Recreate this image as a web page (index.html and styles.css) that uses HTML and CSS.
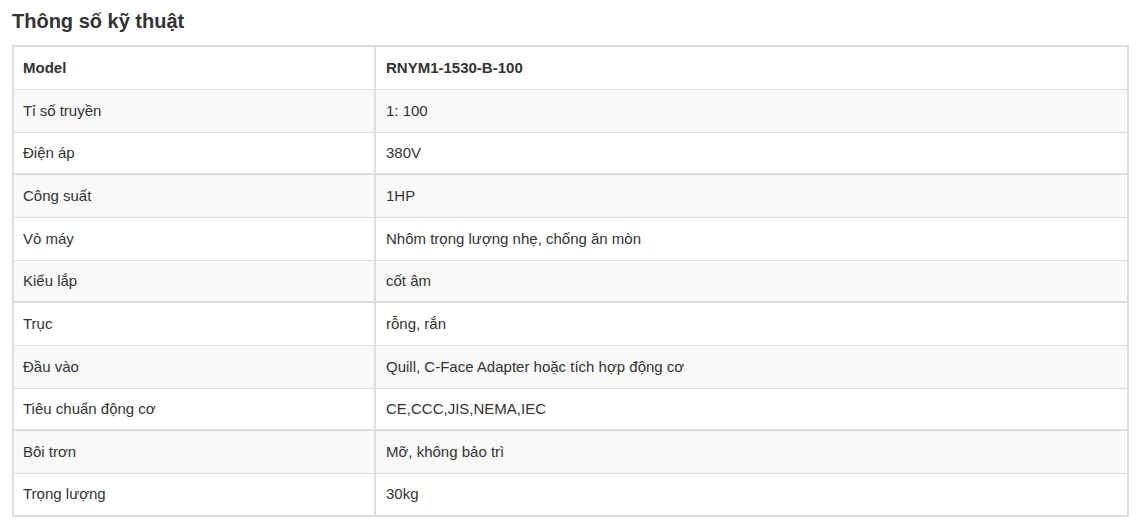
FILE: index.html
```html
<!DOCTYPE html>
<html lang="vi">
<head>
<meta charset="utf-8">
<title>Thông số kỹ thuật</title>
<link rel="stylesheet" href="styles.css">
</head>
<body>
<div class="page">
  <h2 class="title">Thông số kỹ thuật</h2>
  <table class="specs">
    <tbody>
      <tr class="head"><td>Model</td><td>RNYM1-1530-B-100</td></tr>
      <tr><td>Tỉ số truyền</td><td>1: 100</td></tr>
      <tr><td>Điện áp</td><td>380V</td></tr>
      <tr><td>Công suất</td><td>1HP</td></tr>
      <tr><td>Vỏ máy</td><td>Nhôm trọng lượng nhẹ, chống ăn mòn</td></tr>
      <tr><td>Kiểu lắp</td><td>cốt âm</td></tr>
      <tr><td>Trục</td><td>rỗng, rắn</td></tr>
      <tr><td>Đầu vào</td><td>Quill, C-Face Adapter hoặc tích hợp động cơ</td></tr>
      <tr><td>Tiêu chuẩn động cơ</td><td>CE,CCC,JIS,NEMA,IEC</td></tr>
      <tr><td>Bôi trơn</td><td>Mỡ, không bảo trì</td></tr>
      <tr><td>Trọng lượng</td><td>30kg</td></tr>
    </tbody>
  </table>
</div>
</body>
</html>
```

FILE: styles.css
```css
html, body {
  margin: 0;
  padding: 0;
  background: #fff;
}

.page {
  padding: 0 11px 0 12px;
  font-family: "Liberation Sans", Arial, sans-serif;
  color: #333;
}

.title {
  margin: 0;
  padding-top: 9px;
  height: 45px;
  box-sizing: border-box;
  font-size: 20px;
  line-height: 24px;
  font-weight: bold;
  color: #333;
}

.specs {
  width: 100%;
  border-collapse: collapse;
  border: 2px solid #ddd;
  font-size: 15px;
  line-height: 20px;
}

.specs td {
  border: 1px solid #ddd;
  padding: 0 9px;
  height: 43px;
  box-sizing: border-box;
  vertical-align: middle;
}

.specs td:first-child {
  width: 362px;
  border-right: 2px solid #ddd;
}

.specs td:last-child {
  padding-left: 10px;
}

.specs tr:nth-child(even) td {
  background: #f9f9f9;
}

.specs tr:nth-child(3n) td {
  border-bottom-width: 2px;
  height: 42px;
}

.specs tr.head td {
  font-weight: bold;
}
```
